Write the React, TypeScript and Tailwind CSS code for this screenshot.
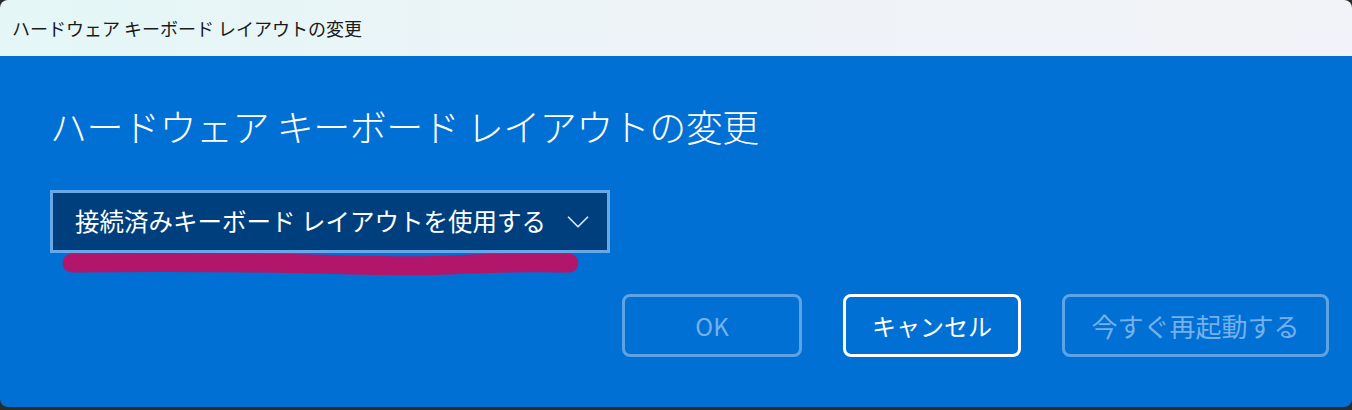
import { ChevronDown } from 'lucide-react'

const JP = "font-['Noto_Sans_CJK_JP','Noto_Sans',sans-serif]"

export default function App() {
  return (
    <div className={`w-[1352px] h-[410px] overflow-hidden bg-[#2b2b2b] ${JP}`}>
      <div className="h-[407px] rounded-[8px] overflow-hidden flex flex-col">
        {/* Title bar */}
        <div className="h-[56px] shrink-0 flex items-center pl-[12px] bg-gradient-to-r from-[#e4f7f6] via-[#eef3f7] to-[#f2f3f8]">
          <span className="text-[18px] leading-none text-[#1a1a1a]">ハードウェア キーボード レイアウトの変更</span>
        </div>

        {/* Body */}
        <div className="flex-1 bg-[#0170d5] flex flex-col pl-[50px] pr-[23px]">
          <h1 className="mt-[42px] text-[37px] leading-[56px] font-light text-white tracking-[-0.5px]">
            ハードウェア キーボード レイアウトの変更
          </h1>

          <div className="relative mt-[36px] w-[560px]">
            <div className="h-[63px] border-[3px] border-[#66a8e8] bg-[#003f7e] flex items-center justify-between pl-[22px] pr-[10px]">
              <span className="text-[24.5px] text-white">接続済みキーボード レイアウトを使用する</span>
              <ChevronDown size={38} strokeWidth={1.1} className="text-[#d8e6f4]" />
            </div>
            <svg className="absolute left-0 top-[63px] pointer-events-none" width="560" height="30" viewBox="0 0 560 30">
              <path
                d="M22 10 C 120 9, 230 10, 300 12 C 340 13, 380 14, 420 11 C 470 9, 510 10, 519 10"
                fill="none"
                stroke="#b1166a"
                strokeWidth="19"
                strokeLinecap="round"
              />
            </svg>
          </div>

          <div className="mt-[41px] flex justify-end gap-[41px]">
            <button className="w-[180px] h-[63px] rounded-[8px] border-[3px] border-[#5ea3e6] text-[24px] text-[#76b0ea]">
              OK
            </button>
            <button className="w-[178px] h-[63px] rounded-[8px] border-[3px] border-white text-[24px] text-white">
              キャンセル
            </button>
            <button className="w-[267px] h-[63px] rounded-[8px] border-[3px] border-[#5ea3e6] text-[26px] text-[#76b0ea]">
              今すぐ再起動する
            </button>
          </div>
        </div>
      </div>
    </div>
  )
}
